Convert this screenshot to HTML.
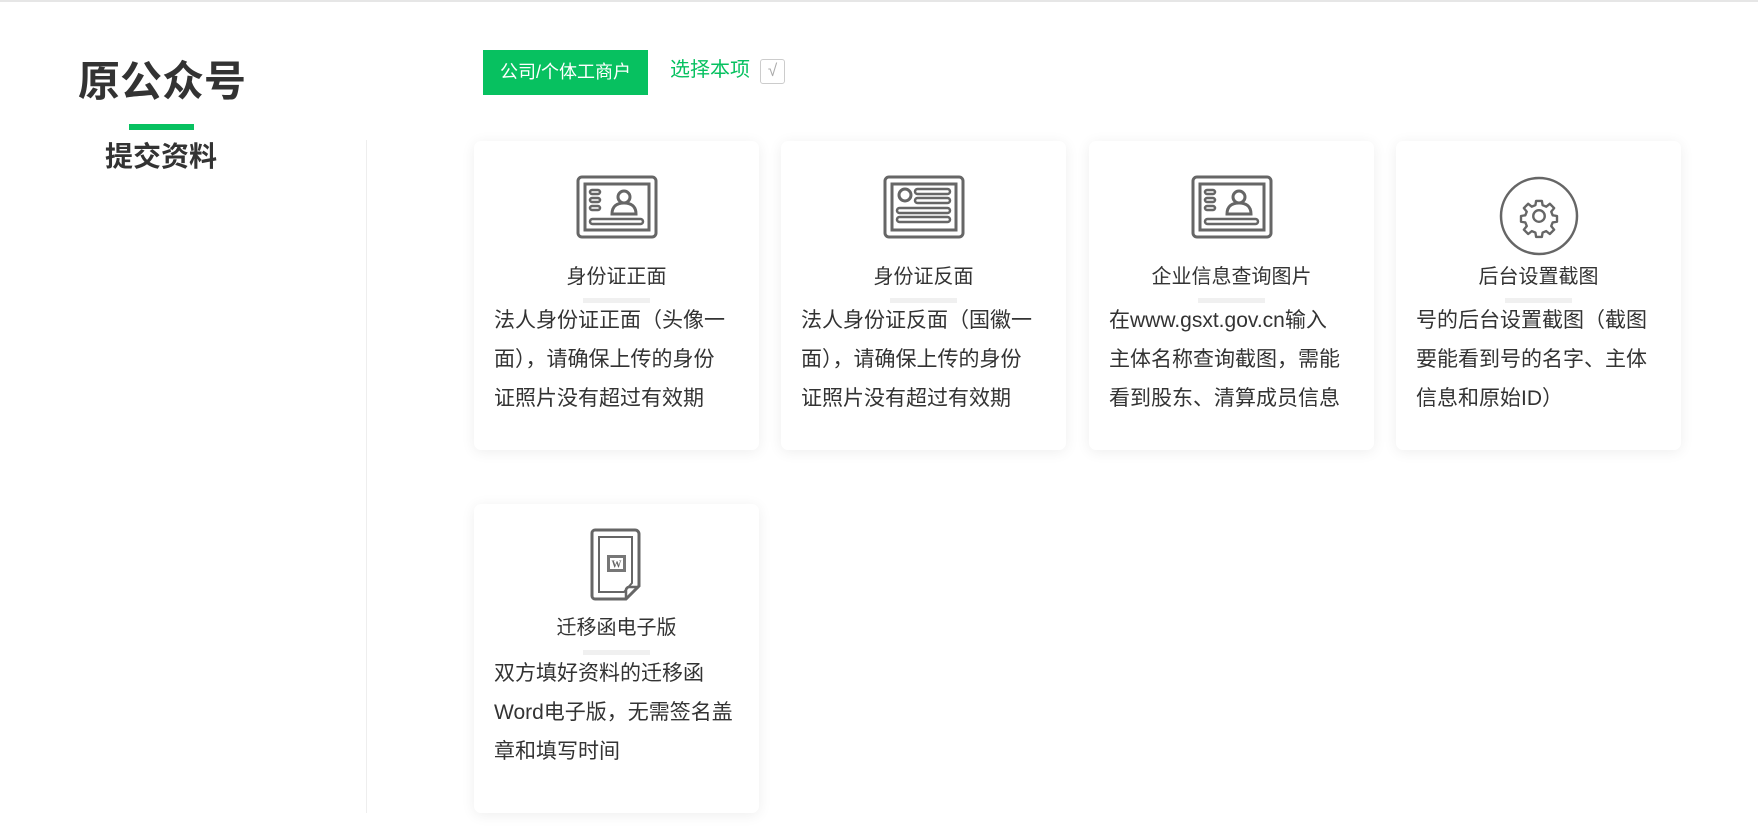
<!DOCTYPE html>
<html><head><meta charset="utf-8"><style>
*{margin:0;padding:0;box-sizing:border-box}
body{width:1758px;height:827px;background:#fff;position:relative;overflow:hidden;font-family:"Liberation Sans","Noto Sans CJK SC",sans-serif;color:#333}
.topline{position:absolute;left:0;top:0;width:1758px;height:2px;background:#e6e6e6}
.h1{position:absolute;left:78px;top:48px;font-size:42px;font-weight:bold;color:#333}
.bar{position:absolute;left:129px;top:124px;width:65px;height:6px;background:#07c160}
.h2{position:absolute;left:105px;top:135px;font-size:28px;font-weight:bold;color:#333}
.vline{position:absolute;left:366px;top:140px;width:1px;height:673px;background:#eee}
.btn{position:absolute;left:483px;top:50px;width:165px;height:45px;background:#07c160;color:#fff;font-size:18px;line-height:45px;text-align:center}
.sel{position:absolute;left:670px;top:57px;font-size:20px;color:#07c160;line-height:26px}
.chk{position:absolute;left:760px;top:59px;width:25px;height:25px;border:1.5px solid #ccc;border-radius:3px;color:#aaa;font-size:17px;text-align:center;line-height:22px}
.card{position:absolute;width:285px;height:309px;background:#fff;border-radius:7px;box-shadow:0 2px 14px rgba(0,0,0,0.07)}
.card svg{position:absolute}
.ct{position:absolute;left:0;top:119px;width:100%;text-align:center;font-size:20px;color:#333}
.gb{position:absolute;left:109px;top:157px;width:67px;height:5px;background:#f0f0f0}
.desc{position:absolute;left:20px;top:160px;width:265px;font-size:21px;line-height:39px;color:#333;white-space:nowrap}
.r2 .ct{top:107px}.r2 .gb{top:146px}.r2 .desc{top:150px}
</style></head><body>
<div class="topline"></div>
<div class="h1">原公众号</div>
<div class="bar"></div>
<div class="h2">提交资料</div>
<div class="vline"></div>
<div class="btn">公司/个体工商户</div>
<div class="sel">选择本项</div>
<div class="chk">√</div>

<div class="card" style="left:474px;top:141px">
<svg style="left:102px;top:34px" width="82" height="65" viewBox="0 0 82 65" fill="none" stroke="#666" stroke-width="3">
<rect x="2" y="2" width="78" height="60" rx="4"/><rect x="9" y="9" width="64" height="46"/>
<rect x="14" y="15" width="10" height="4" rx="2" stroke-width="2.5"/><rect x="14" y="23" width="10" height="4" rx="2" stroke-width="2.5"/><rect x="14" y="31" width="10" height="4" rx="2" stroke-width="2.5"/>
<circle cx="48" cy="22" r="6"/><path d="M36 39c0-8 5-11 12-11s12 3 12 11z"/>
<rect x="14" y="44" width="53" height="5" rx="2.5" stroke-width="2.5"/></svg>
<div class="ct">身份证正面</div><div class="gb"></div>
<div class="desc">法人身份证正面（头像一<br>面），请确保上传的身份<br>证照片没有超过有效期</div></div>

<div class="card" style="left:781px;top:141px">
<svg style="left:102px;top:34px" width="82" height="65" viewBox="0 0 82 65" fill="none" stroke="#666" stroke-width="3">
<rect x="2" y="2" width="78" height="60" rx="4"/><rect x="9" y="9" width="64" height="46"/>
<circle cx="22" cy="20" r="6"/><rect x="32" y="14" width="35" height="5" rx="2.5" stroke-width="2.5"/><rect x="32" y="23" width="35" height="5" rx="2.5" stroke-width="2.5"/>
<rect x="14" y="33" width="53" height="5" rx="2.5" stroke-width="2.5"/><rect x="14" y="42" width="53" height="5" rx="2.5" stroke-width="2.5"/></svg>
<div class="ct">身份证反面</div><div class="gb"></div>
<div class="desc">法人身份证反面（国徽一<br>面），请确保上传的身份<br>证照片没有超过有效期</div></div>

<div class="card" style="left:1089px;top:141px">
<svg style="left:102px;top:34px" width="82" height="65" viewBox="0 0 82 65" fill="none" stroke="#666" stroke-width="3">
<rect x="2" y="2" width="78" height="60" rx="4"/><rect x="9" y="9" width="64" height="46"/>
<rect x="14" y="15" width="10" height="4" rx="2" stroke-width="2.5"/><rect x="14" y="23" width="10" height="4" rx="2" stroke-width="2.5"/><rect x="14" y="31" width="10" height="4" rx="2" stroke-width="2.5"/>
<circle cx="48" cy="22" r="6"/><path d="M36 39c0-8 5-11 12-11s12 3 12 11z"/>
<rect x="14" y="44" width="53" height="5" rx="2.5" stroke-width="2.5"/></svg>
<div class="ct">企业信息查询图片</div><div class="gb"></div>
<div class="desc">在www.gsxt.gov.cn输入<br>主体名称查询截图，需能<br>看到股东、清算成员信息</div></div>

<div class="card" style="left:1396px;top:141px">
<svg style="left:102px;top:34px" width="82" height="82" viewBox="0 0 82 82" fill="none" stroke="#666" stroke-width="2.5">
<circle cx="41" cy="41" r="38"/>
<g transform="translate(41 41) scale(0.72) translate(-41 -41)">
<path d="M37 20h8l1 6 5 2 5-4 6 6-4 5 2 5 6 1v8l-6 1-2 5 4 5-6 6-5-4-5 2-1 6h-8l-1-6-5-2-5 4-6-6 4-5-2-5-6-1v-8l6-1 2-5-4-5 6-6 5 4 5-2z" stroke-linejoin="round" stroke-width="3.3"/>
<circle cx="41" cy="41" r="8" stroke-width="3.3"/></g></svg>
<div class="ct">后台设置截图</div><div class="gb"></div>
<div class="desc">号的后台设置截图（截图<br>要能看到号的名字、主体<br>信息和原始ID）</div></div>

<div class="card r2" style="left:474px;top:504px">
<svg style="left:116px;top:24px" width="54" height="73" viewBox="0 0 54 73" fill="none" stroke="#666" stroke-width="3">
<path d="M5 2h40a4 4 0 0 1 4 4v52l-13 13H5a3 3 0 0 1-3-3V5a3 3 0 0 1 3-3z"/>
<path d="M9 9h33v46l-8 9H9z" stroke-width="2"/>
<path d="M36 71v-9a3 3 0 0 1 3-3h10" stroke-width="2.5"/>
<rect x="17" y="27" width="19" height="17" fill="#777" stroke="none"/><rect x="20" y="30" width="13" height="11" fill="#fff" stroke="none"/>
<text x="26.5" y="39.5" font-size="10" font-weight="bold" text-anchor="middle" fill="#666" stroke="none" font-family="Liberation Serif">W</text></svg>
<div class="ct">迁移函电子版</div><div class="gb"></div>
<div class="desc">双方填好资料的迁移函<br>Word电子版，无需签名盖<br>章和填写时间</div></div>
</body></html>
